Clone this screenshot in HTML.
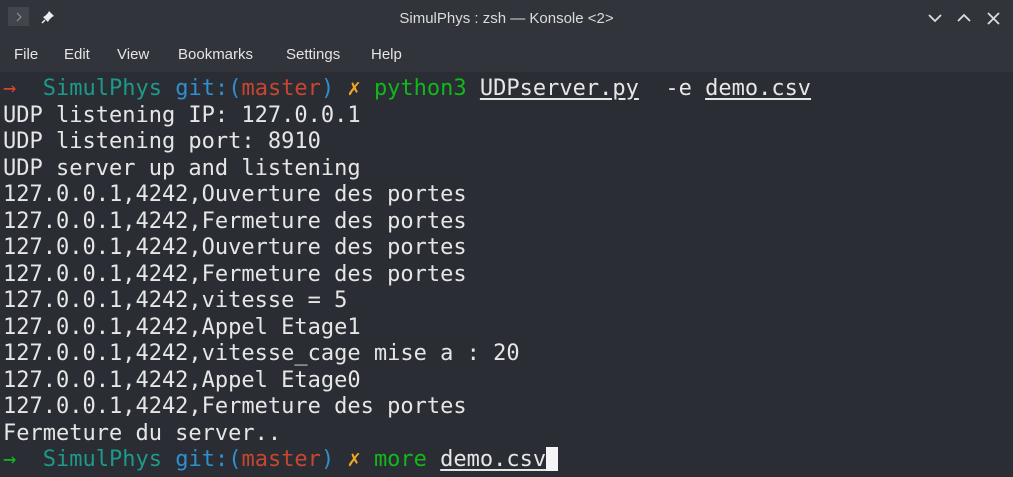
<!DOCTYPE html>
<html><head><meta charset="utf-8"><style>
html,body{margin:0;padding:0;width:1013px;height:477px;overflow:hidden;background:#2a2d33;}
.title{position:absolute;left:0;top:0;width:1013px;height:36px;background:#31343a;}
.title .t{position:absolute;left:0;width:1013px;top:10px;text-align:center;color:#dcdcdc;font:15px "Liberation Sans",sans-serif;}
.menu{position:absolute;left:0;top:36px;width:1013px;height:36px;background:#31343a;color:#e4e4e4;font:15px "Liberation Sans",sans-serif;}
.menu span{position:absolute;top:10px;}
.term{position:absolute;left:3px;top:76px;font:22px "DejaVu Sans Mono",monospace;line-height:26.5px;color:#e6e6e6;white-space:pre;}
.r{color:#d2452f}.c{color:#1d9a8a}.b{color:#2f8fd0}.m{color:#c9452f}.y{color:#f0a528}.g{color:#11b81a}
u{text-decoration:underline;text-underline-offset:3px;}
.cur{display:inline-block;width:12px;height:24px;background:#f5f5f5;vertical-align:-5px;}
</style></head><body>
<div class="title">
<div style="position:absolute;left:8px;top:7px;width:21px;height:19px;background:#42464c;"></div>
<svg style="position:absolute;left:13px;top:10px" width="12" height="14"><path d="M4 3l4 4-4 4" stroke="#999" fill="none" stroke-width="1"/></svg>
<svg style="position:absolute;left:40px;top:9px" width="16" height="16"><path d="M9 2l5 5-2 1-3 3-1 2-5-5 2-1 3-3z" fill="#eee"/><path d="M5 11l-3 3" stroke="#eee" stroke-width="1.5"/></svg>
<div class="t">SimulPhys : zsh — Konsole &lt;2&gt;</div>
<svg style="position:absolute;left:926px;top:10px" width="80" height="16"><path d="M3 5l6 6 6-6" stroke="#ddd" stroke-width="1.8" fill="none"/><path d="M32 11l6-6 6 6" stroke="#ddd" stroke-width="1.8" fill="none"/><path d="M62 3l11 11M73 3L62 14" stroke="#ddd" stroke-width="1.8"/></svg>
</div>
<div class="menu"><span style="left:14px">File</span><span style="left:64px">Edit</span><span style="left:117px">View</span><span style="left:178px">Bookmarks</span><span style="left:286px">Settings</span><span style="left:371px">Help</span></div>
<div class="term"><span class="r">→</span>  <span class="c">SimulPhys</span> <span class="b">git:(</span><span class="m">master</span><span class="b">)</span> <span class="y">✗</span> <span class="g">python3</span> <u>UDPserver.py</u>  -e <u>demo.csv</u>
UDP listening IP: 127.0.0.1
UDP listening port: 8910
UDP server up and listening
127.0.0.1,4242,Ouverture des portes
127.0.0.1,4242,Fermeture des portes
127.0.0.1,4242,Ouverture des portes
127.0.0.1,4242,Fermeture des portes
127.0.0.1,4242,vitesse = 5
127.0.0.1,4242,Appel Etage1
127.0.0.1,4242,vitesse_cage mise a : 20
127.0.0.1,4242,Appel Etage0
127.0.0.1,4242,Fermeture des portes
Fermeture du server..
<span class="g">→</span>  <span class="c">SimulPhys</span> <span class="b">git:(</span><span class="m">master</span><span class="b">)</span> <span class="y">✗</span> <span class="g">more</span> <u>demo.csv</u><span class="cur"></span></div>
</body></html>
